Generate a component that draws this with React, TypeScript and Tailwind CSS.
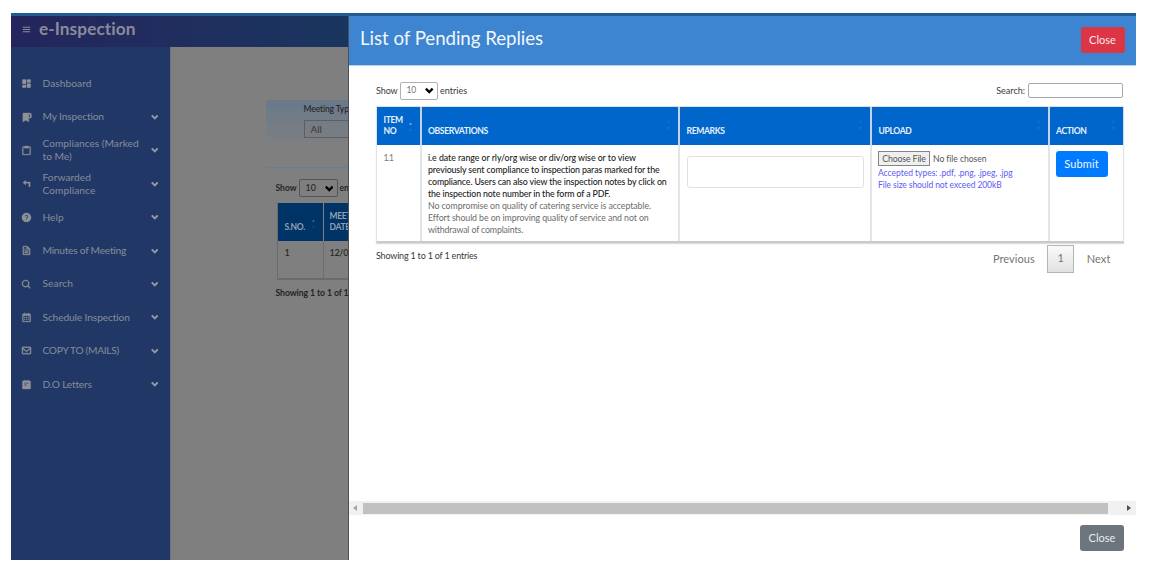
import React from "react";
import { BiSolidDashboard, BiClipboard, BiSolidHelpCircle, BiFile, BiSearch, BiCalendar, BiEnvelope, BiSolidNotepad, BiMenu } from "react-icons/bi";

function BookmarkIcon() {
  return (
    <svg viewBox="0 0 24 24" className="size-full" fill="currentColor">
      <path d="M5 2h14a4 4 0 0 1 4 4v4.500a3 3 0 0 1-3 3h-3V22l-6.500-3.800L4 22V4z" />
      <path d="M17 6v5.500h2.500V6a1.250 1.250 0 0 0-2.500 0z" fill="#213867" />
    </svg>
  );
}

function ForwardIcon() {
  return (
    <svg viewBox="0 0 24 24" className="size-full" fill="currentColor">
      <path d="M10 5v3.500h9a1 1 0 0 1 1 1V19h-3v-7.500h-7V15L4 10z" />
    </svg>
  );
}

function Chevron({ className }: { className: string }) {
  return (
    <svg viewBox="0 0 10 8" className={className} fill="none" stroke="currentColor" strokeWidth="2.700">
      <path d="M1 1.800 5 5.800 9 1.800" />
    </svg>
  );
}

const menu: { lines: string[]; icon: React.ComponentType; leaf?: boolean; cls: string }[] = [
  { lines: ["Dashboard"], icon: BiSolidDashboard, leaf: true, cls: "tracking-[0.050px]" },
  { lines: ["My Inspection"], icon: BookmarkIcon, cls: "tracking-[-0.150px]" },
  { lines: ["Compliances (Marked", "to Me)"], icon: BiClipboard, cls: "tracking-[0px]" },
  { lines: ["Forwarded", "Compliance"], icon: ForwardIcon, cls: "tracking-[0.050px]" },
  { lines: ["Help"], icon: BiSolidHelpCircle, cls: "tracking-[0px]" },
  { lines: ["Minutes of Meeting"], icon: BiFile, cls: "tracking-[-0.250px]" },
  { lines: ["Search"], icon: BiSearch, cls: "tracking-[0.100px]" },
  { lines: ["Schedule Inspection"], icon: BiCalendar, cls: "tracking-[-0.120px]" },
  { lines: ["COPY TO (MAILS)"], icon: BiEnvelope, cls: "tracking-[-0.300px]" },
  { lines: ["D.O Letters"], icon: BiSolidNotepad, cls: "tracking-[-0.200px]" },
];

function SortMarks({ active }: { active?: boolean }) {
  return (
    <svg viewBox="0 0 5 10" className="h-[10px] w-[5px] shrink-0">
      <path d="M1 2.500 2.500 1 4 2.500z" fill={active ? "#b5d3f2" : "#2b7cd4"} />
      <path d="M1 7.500 2.500 9 4 7.500z" fill={active ? "#2277d4" : "#2b7cd4"} />
    </svg>
  );
}

function Sidebar() {
  return (
    <nav className="w-[159px] shrink-0 bg-[#213867] pt-[20px] text-[10.200px] leading-[13.300px] text-[#868c99]">
      {menu.map(({ lines, icon: Icon, leaf, cls }) => (
        <div key={lines[0]} className="flex h-[33.400px] items-center pr-[12px] pl-[10px]">
          <span className="flex size-[11px] shrink-0 text-[11px] text-[#8f9296] [&_svg]:stroke-current [&_svg]:[stroke-width:0.600px]">
            <Icon />
          </span>
          <span className={`ml-[10.500px] grow whitespace-nowrap ${cls}`}>
            {lines.map((l) => (
              <span key={l} className="block">{l}</span>
            ))}
          </span>
          {!leaf && <Chevron className="h-[6px] w-[7.500px] shrink-0 text-[#9598a0]" />}
        </div>
      ))}
    </nav>
  );
}

function Backdrop() {
  return (
    <div className="flex w-[338px] shrink-0 flex-col border-r border-[#505050]">
      <header className="flex h-[31px] shrink-0 items-center bg-linear-to-r from-[#24255c] to-[#19365f] pb-[5px] pl-[10px] text-[#898b98]">
        <BiMenu className="size-[11px]" />
        <span className="ml-[7px] text-[17.300px] font-bold tracking-[0.050px]">e-Inspection</span>
      </header>
      <div className="flex grow">
        <Sidebar />
        <main className="flex min-w-0 grow flex-col overflow-hidden border-l border-[#707070] bg-[#7f7f7f] text-[9px] text-[#252525]">
          <section className="mt-[53px] ml-[94.500px] h-[68px] border-b border-[#637f96] bg-linear-to-b from-[#68798a] to-[#7f7f80] to-70% pl-[38px]">
            <div className="pt-[3px] text-[8.600px] leading-[13px] font-medium tracking-[-0.150px] whitespace-nowrap">Meeting Type</div>
            <div className="mt-[4px] flex h-[18px] w-[80px] items-center border border-[#5e5e5e] pl-[6px] text-[10px] text-[#3a3a3a]">All</div>
          </section>
          <div className="mt-[11px] ml-[104.500px] flex h-[18px] items-center font-bold whitespace-nowrap">
            <span className="text-[8.500px]">Show</span>
            <span className="ml-[2px] flex h-[18px] w-[39px] shrink-0 items-center justify-between rounded-[2px] border border-[#555] pr-[3.500px] pl-[6px] text-[8.800px] font-medium">
              10 <Chevron className="h-[7px] w-[8.500px] text-black" />
            </span>
            <span className="ml-[2px] text-[8.500px]">entries</span>
          </div>
          <div className="mt-[6px] ml-[105.500px] border-b-2 border-l border-[#696b6d]">
            <div className="flex h-[38px] gap-px text-[8.500px] leading-[11.700px] font-bold text-[#8fa0b1]">
              <div className="flex w-[45px] shrink-0 items-end justify-between bg-[#003366] pr-[7px] pb-[7px] pl-[7px] tracking-[-0.300px]">
                S.NO. <span className="pb-[5px] opacity-50"><SortMarks active /></span>
              </div>
              <div className="flex w-[80px] shrink-0 items-end bg-[#003366] pb-[7px] pl-[6px] tracking-[-0.350px]">
                <span>MEETING<br />DATE</span>
              </div>
            </div>
            <div className="flex h-[37px] gap-px text-[9px] leading-[12px] font-medium">
              <div className="w-[46px] shrink-0 border-r border-[#6c6e70] pt-[6px] pl-[7px]">1</div>
              <div className="w-[80px] shrink-0 pt-[6px] pl-[5px] tracking-[-0.300px]">12/04/2023</div>
            </div>
          </div>
          <div className="mt-[6px] ml-[104.500px] text-[8.700px] leading-[13px] font-bold tracking-[-0.100px] whitespace-nowrap">Showing 1 to 1 of 1 entries</div>
        </main>
      </div>
    </div>
  );
}

const cols = "grid grid-cols-[44.500px_258.500px_192px_177.500px_74.500px]";

function Head({ children, active, last }: { children: React.ReactNode; active?: boolean; last?: boolean }) {
  return (
    <div className={`flex items-end justify-between bg-[#0066cc] pr-[7px] pb-[6.500px] pl-[6.500px] ${last ? "border-r border-[#d5dde5]" : "border-r-2 border-[#c5d3e2]"}`}>
      <span>{children}</span>
      <span className={active ? "pb-[6px]" : "pb-[8px]"}><SortMarks active={active} /></span>
    </div>
  );
}

function RepliesTable() {
  return (
    <div className="ml-[27px] w-[748px] border border-b-2 border-[#dfe3e6] border-b-[#c7cbcd] shadow-[0_1px_1px_#ddd]">
      <div className={`${cols} h-[38px] text-[8.600px] leading-[11.700px] font-bold tracking-[-0.370px] text-[#e6f0fa]`}>
        <Head active>ITEM<br />NO</Head>
        <Head>OBSERVATIONS</Head>
        <Head>REMARKS</Head>
        <Head>UPLOAD</Head>
        <Head last>ACTION</Head>
      </div>
      <div className={`${cols} h-[96px] text-[8.800px] leading-[12px]`}>
        <div className="border-r-2 border-[#e1e5e8] pt-[7px] pl-[6.500px] text-[8.500px] tracking-[-0.700px] text-[#777]">1.1</div>
        <div className="border-r-2 border-[#e1e5e8] pt-[7px] pl-[6.500px] whitespace-nowrap">
          <div className="font-medium text-[#222]">
            <div className="tracking-[-0.050px]">i.e date range or rly/org wise or div/org wise or to view</div>
            <div className="tracking-[-0.120px]">previously sent compliance to inspection paras marked for the</div>
            <div className="tracking-[-0.130px]">compliance. Users can also view the inspection notes by click on</div>
            <div className="tracking-[-0.140px]">the inspection note number in the form of a PDF.</div>
          </div>
          <div className="text-[#6c6c6c]">
            <div className="tracking-[-0.080px]">No compromise on quality of catering service is acceptable.</div>
            <div className="tracking-[-0.090px]">Effort should be on improving quality of service and not on</div>
            <div className="tracking-[-0.150px]">withdrawal of complaints.</div>
          </div>
        </div>
        <div className="border-r-2 border-[#e1e5e8] pt-[11px] pl-[6.500px]">
          <div className="h-[32px] w-[177px] rounded-[3px] border border-[#dfe1e4]" />
        </div>
        <div className="border-r-2 border-[#e1e5e8] pt-[6px] pl-[6px] whitespace-nowrap">
          <div className="flex h-[16px] items-center text-[#555]">
            <span className="flex h-[15px] w-[52px] shrink-0 items-center justify-center border border-[#858585] bg-[#efefef] tracking-[-0.150px]">Choose File</span>
            <span className="ml-[3px] text-[8.600px] tracking-[-0.050px]">No file chosen</span>
          </div>
          <div className="text-[8.500px] text-[#5b5bf5]">
            <div className="tracking-[-0.020px]">Accepted types: .pdf, .png, .jpeg, .jpg</div>
            <div className="tracking-[-0.080px]">File size should not exceed 200kB</div>
          </div>
        </div>
        <div className="border-r border-[#e1e5e8] pt-[6px] pl-[6px]">
          <button className="flex h-[26px] w-[52px] items-center justify-center rounded-[3px] bg-[#007bff] text-[11px] tracking-[0.100px] text-[#eef6ff]">Submit</button>
        </div>
      </div>
    </div>
  );
}

function Modal() {
  return (
    <section className="flex min-w-0 grow flex-col bg-white">
      <header className="flex h-[49.500px] shrink-0 items-start justify-between border-b border-[#b5d2ee] bg-[#3d85d0] pr-[11.500px] pl-[11px]">
        <h1 className="pt-[10px] text-[18.700px] leading-[24px] tracking-[-0.050px] text-[#f2f7fc]">List of Pending Replies</h1>
        <button className="mt-[11px] flex h-[26px] w-[44px] items-center justify-center rounded-[3px] bg-[#dc3545] text-[11px] text-[#fbeaec]">Close</button>
      </header>
      <div className="mt-[16px] mb-[6px] flex h-[18px] shrink-0 items-center justify-between pr-[13.500px] pl-[27px] text-[9px] text-[#3a3a3a]">
        <div className="flex items-center">
          <span className="tracking-[-0.100px]">Show</span>
          <span className="ml-[2px] flex h-[18px] w-[38.500px] items-center justify-between rounded-[2px] border border-[#b0b0b0] pr-[3.500px] pl-[6px] text-[8.500px] tracking-[-0.300px] text-[#777]">
            10 <Chevron className="h-[7px] w-[8.500px] text-black" />
          </span>
          <span className="ml-[2px]">entries</span>
        </div>
        <label className="flex items-center">
          Search:
          <span className="ml-[3px] h-[14.500px] w-[94.500px] rounded-[2px] border border-[#a8a8a8]" />
        </label>
      </div>
      <RepliesTable />
      <div className="flex justify-between pr-[25.500px] pl-[27px]">
        <span className="pt-[7px] text-[9px] leading-[12px] tracking-[-0.200px] text-[#3a3a3a]">Showing 1 to 1 of 1 entries</span>
        <div className="mt-[2px] flex h-[28px] items-center text-[11px] text-[#757575]">
          <span className="pt-[1px] tracking-[0.050px]">Previous</span>
          <span className="mx-[12.500px] flex h-[28px] w-[27px] items-center justify-center border border-[#b5b5b5] bg-linear-to-b from-[#fafafa] to-[#e1e1e1]">1</span>
          <span className="pt-[1px] tracking-[0.100px]">Next</span>
        </div>
      </div>
      <div className="mt-auto flex h-[14px] shrink-0 items-center bg-[#f1f1f1] pr-[5px] pl-[4px]">
        <svg viewBox="0 0 4 6" className="h-[6px] w-[4px]"><path d="M4 0v6L0 3z" fill="#a3a3a3" /></svg>
        <span className="ml-[6px] h-[11px] w-[745px] bg-[#c1c1c1]" />
        <svg viewBox="0 0 4 6" className="ml-auto h-[6px] w-[4px]"><path d="M0 0v6l4-3z" fill="#505050" /></svg>
      </div>
      <footer className="flex h-[45px] shrink-0 justify-end pt-[10px] pr-[12px]">
        <button className="flex h-[26px] w-[44px] items-center justify-center rounded-[3px] bg-[#6c757d] pt-[1px] text-[11px] text-[#e9ebed]">Close</button>
      </footer>
    </section>
  );
}

export default function App() {
  return (
    <div className="h-[568px] w-[1156px] overflow-hidden bg-white pt-[13px] pl-[11px] font-[Lato,sans-serif]">
      <div className="flex h-[547px] w-[1125px] flex-col">
        <div className="h-[3px] shrink-0 bg-[#245b94]" />
        <div className="flex grow">
          <Backdrop />
          <Modal />
        </div>
      </div>
    </div>
  );
}
